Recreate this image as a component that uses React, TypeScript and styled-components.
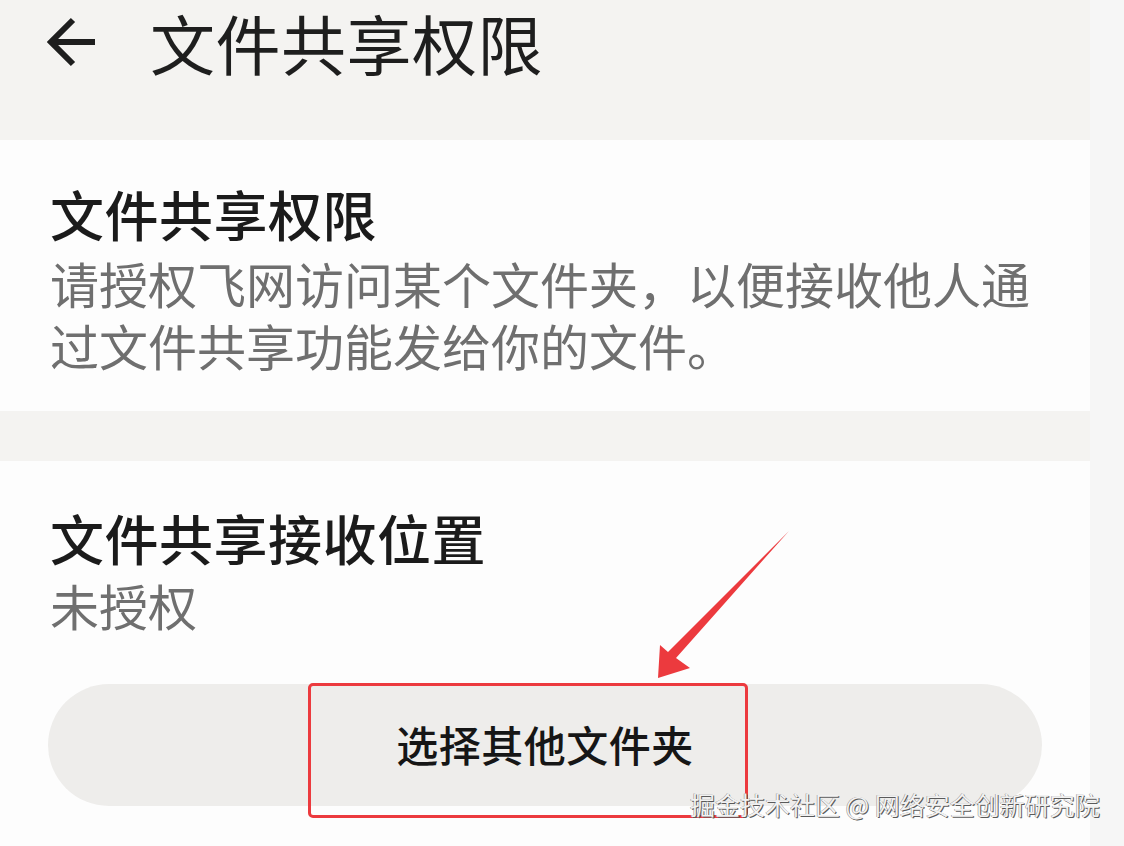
import React from "react";
import styled, { createGlobalStyle } from "styled-components";

const Global = createGlobalStyle`
  html, body { margin: 0; padding: 0; background: #f6f6f6; }
  body { font-family: "Noto Sans CJK SC", "Noto Sans", sans-serif; }
  #root { width: 1124px; height: 846px; overflow: hidden; }
`;

const Page = styled.div`
  position: relative;
  display: flex;
  width: 1124px;
  height: 846px;
  overflow: hidden;
`;

const Main = styled.div`
  width: 1090px;
  display: flex;
  flex-direction: column;
  background: #f4f3f1;
`;

const Strip = styled.div`
  flex: 1;
  background: #f6f6f6;
`;

const Header = styled.header`
  height: 140px;
  box-sizing: border-box;
  display: flex;
  align-items: flex-start;
  padding: 0 0 0 46px;
  gap: 52px;
`;

const BackButton = styled.div`
  width: 52px;
  height: 84px;
  display: flex;
  align-items: center;
  color: #1e1e1e;
`;

const PageTitle = styled.h1`
  margin: 0;
  font-size: 65px;
  line-height: 84px;
  font-weight: 400;
  color: #1e1e1e;
  letter-spacing: 0.5px;
  white-space: nowrap;
`;

const Card = styled.section<{ $grow?: boolean; $pt: number; $pb: number }>`
  background: #fdfdfd;
  padding: ${(p) => p.$pt}px 48px ${(p) => p.$pb}px 48px;
  ${(p) => (p.$grow ? "flex: 1;" : "")}
`;

const Spacer = styled.div`
  height: 50px;
  flex: none;
`;

const ItemTitle = styled.h2`
  margin: 0 0 0 2px;
  font-size: 54px;
  line-height: 65px;
  font-weight: 500;
  color: #1b1b1b;
  letter-spacing: 0.5px;
`;

const ItemDesc = styled.p<{ $mt: number }>`
  margin: ${(p) => p.$mt}px 0 0 2px;
  font-size: 49px;
  line-height: 62px;
  font-weight: 400;
  color: #6f6f6f;
`;

const PillButton = styled.button`
  display: flex;
  align-items: center;
  justify-content: center;
  width: 994px;
  height: 122px;
  margin-top: 48px;
  border: none;
  border-radius: 61px;
  background: #eeedeb;
  font-family: "Noto Sans CJK SC", sans-serif;
  font-size: 42px;
  font-weight: 500;
  color: #161616;
  letter-spacing: 0.5px;
  padding: 0 0 4px 0;
`;

const Highlight = styled.div`
  position: absolute;
  left: 308px;
  top: 683px;
  width: 440px;
  height: 135px;
  box-sizing: border-box;
  border: 3px solid #ec3a3e;
  border-radius: 5px;
  pointer-events: none;
`;

const ArrowSvg = styled.svg`
  position: absolute;
  left: 0;
  top: 0;
  pointer-events: none;
`;

const Watermark = styled.div`
  position: absolute;
  left: 690px;
  top: 789px;
  font-size: 25px;
  line-height: 30px;
  color: #f2f2f2;
  text-shadow: 1px 1px 0 #5a5a5a, -0.5px -0.5px 0 #8a8a8a;
  white-space: nowrap;
  pointer-events: none;
`;

export default function App() {
  return (
    <>
      <Global />
      <Page>
        <Main>
          <Header>
            <BackButton>
              <svg width="50" height="50" viewBox="0 0 50 50" fill="none">
                <path
                  d="M49 25H5M27 3L5 25l22 22"
                  stroke="#1e1e1e"
                  strokeWidth="6"
                  strokeLinecap="butt"
                  strokeLinejoin="miter"
                />
              </svg>
            </BackButton>
            <PageTitle>文件共享权限</PageTitle>
          </Header>
          <Card $pt={41} $pb={35}>
            <ItemTitle>文件共享权限</ItemTitle>
            <ItemDesc $mt={6}>
              请授权飞网访问某个文件夹，以便接收他人通
              <br />
              过文件共享功能发给你的文件。
            </ItemDesc>
          </Card>
          <Spacer />
          <Card $grow $pt={44} $pb={0}>
            <ItemTitle>文件共享接收位置</ItemTitle>
            <ItemDesc $mt={4}>未授权</ItemDesc>
            <PillButton>选择其他文件夹</PillButton>
          </Card>
        </Main>
        <Strip />
        <Highlight />
        <ArrowSvg width="1124" height="846" viewBox="0 0 1124 846">
          <polygon
            points="789,531 676,658 690,668 658,678 660,645 668,652"
            fill="#ec3a3e"
          />
        </ArrowSvg>
        <Watermark>掘金技术社区 @ 网络安全创新研究院</Watermark>
      </Page>
    </>
  );
}
